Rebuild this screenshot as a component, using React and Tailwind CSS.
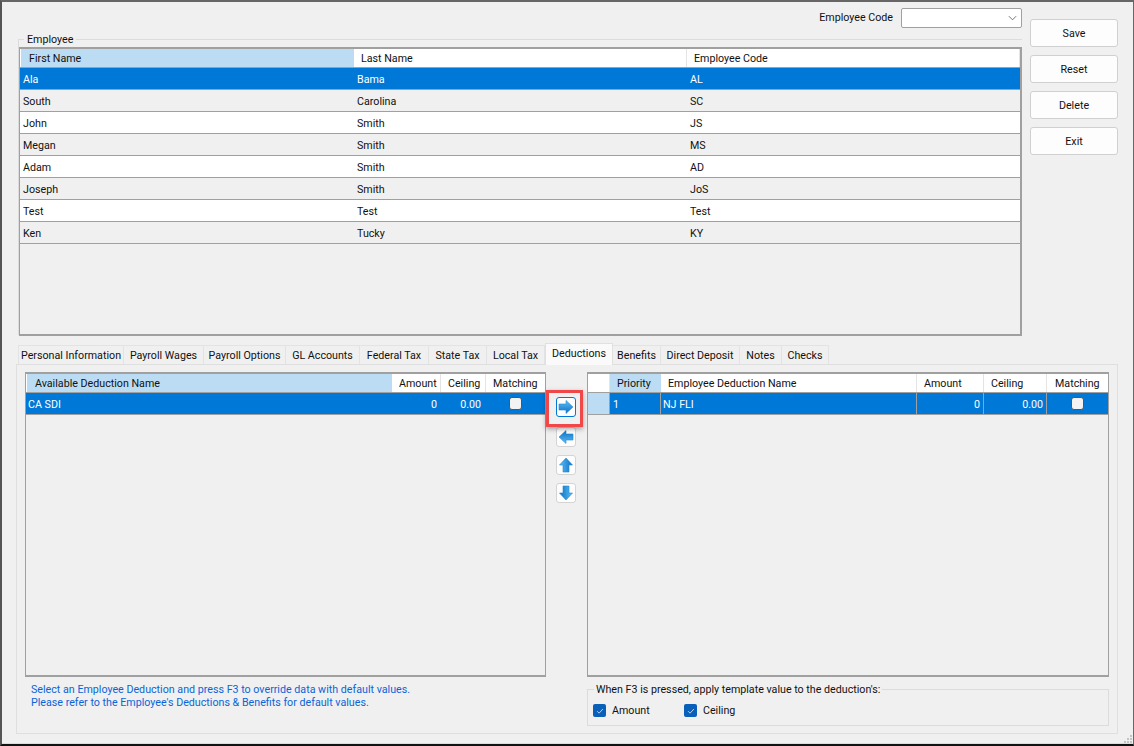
const font = "font-['Roboto','Open_Sans',sans-serif]";

const employees = [
    ['Ala', 'Bama', 'AL'],
    ['South', 'Carolina', 'SC'],
    ['John', 'Smith', 'JS'],
    ['Megan', 'Smith', 'MS'],
    ['Adam', 'Smith', 'AD'],
    ['Joseph', 'Smith', 'JoS'],
    ['Test', 'Test', 'Test'],
    ['Ken', 'Tucky', 'KY'],
];

const tabs = [
    ['Personal Information', 'w-[106px]'],
    ['Payroll Wages', 'w-[80px]'],
    ['Payroll Options', 'w-[82px]'],
    ['GL Accounts', 'w-[74px]'],
    ['Federal Tax', 'w-[69px]'],
    ['State Tax', 'w-[58px]'],
    ['Local Tax', 'w-[58px]'],
    ['Deductions', 'w-[68px]'],
    ['Benefits', 'w-[48px]'],
    ['Direct Deposit', 'w-[79px]'],
    ['Notes', 'w-[42px]'],
    ['Checks', 'w-[47px]'],
];

const Arrow = ({ rotate }) => (
    <svg viewBox="0 0 16 16" className={`w-4 h-4 ${rotate}`}>
        <defs>
            <linearGradient id="arrowBlue" x1="0" y1="0" x2="0" y2="1">
                <stop offset="0" stopColor="#5cc0f4" />
                <stop offset="1" stopColor="#0a6fc8" />
            </linearGradient>
        </defs>
        <path d="M1 5h7V1.5L15 8l-7 6.5V11H1z" fill="url(#arrowBlue)" stroke="#2a86d0" strokeWidth="0.6" />
    </svg>
);

const ArrowButton = ({ rotate, active, className = '' }) => (
    <div className={`w-[20px] h-[20px] flex items-center justify-center rounded-[3px] bg-[#fdfdfd] border ${active ? 'border-[#0078d7]' : 'border-[#d4d4d4]'} ${className}`}>
        <Arrow rotate={rotate} />
    </div>
);

const Check = ({ checked }) =>
    checked ? (
        <span className="w-[13px] h-[13px] rounded-[2px] bg-[#0a5fb8] flex items-center justify-center shrink-0">
            <svg viewBox="0 0 12 12" className="w-[10px] h-[10px]">
                <path d="M2.5 6.2l2.4 2.4 4.6-5" fill="none" stroke="#d6e8fa" strokeWidth="1" />
            </svg>
        </span>
    ) : (
        <span className="w-[13px] h-[13px] rounded-[3px] bg-[#f3f3f3] border border-[#555]" />
    );

const Head = ({ className = '', children }) => (
    <div className={`h-full flex items-center pl-[7px] pt-[2px] border-r border-[#e4e4e4] ${className}`}>{children}</div>
);

const Cell = ({ className = '', children }) => (
    <div className={`h-full flex items-center pt-[3px] border-r border-[#a0a0a0] ${className}`}>{children}</div>
);

export default function App() {
    return (
        <div className={`${font} text-[10.7px] text-[#111] w-[1134px] h-[746px] bg-[#f0f0f0] border-l-2 border-t-2 border-r border-b-2 border-l-[#555] border-t-[#666] border-r-[#666] border-b-[#111] overflow-hidden relative`}>
            <div className="flex h-[341px] pl-[16px]">
                <div className="w-[1004px]">
                    <div className="mt-[6px] h-[20px] flex justify-end items-center">
                        <span className="mr-[8px]">Employee Code</span>
                        <div className="w-[121px] h-[20px] bg-white border border-[#a0a0a0] rounded-[2px] flex items-center justify-end pr-[4px]">
                            <svg viewBox="0 0 10 6" className="w-[9px] h-[6px]">
                                <path d="M1 1l4 4 4-4" fill="none" stroke="#666" strokeWidth="1" />
                            </svg>
                        </div>
                    </div>
                    <div className="mt-[11px] border-t border-l border-[#dcdcdc] h-[296px]">
                        <span className="block w-fit -mt-[7px] ml-[5px] px-[3px] h-[14px] leading-[14px] bg-[#f0f0f0]">Employee</span>
                        <div className="h-[289px] border-2 border-l border-[#a0a0a0]">
                            <div className="grid grid-cols-[334px_333px_333px] h-[19px] bg-white border-b border-[#a0a0a0]">
                                <div className="h-full flex items-center pl-[8px] pt-[2px] bg-[#bcdcf4] ml-[1px]">First Name</div>
                                <Head>Last Name</Head>
                                <Head>Employee Code</Head>
                            </div>
                            {employees.map((row, i) => (
                                <div
                                    key={row[2]}
                                    className={`grid grid-cols-[334px_333px_333px] h-[22px] pt-[3px] items-center border-b border-[#a0a0a0] ${i === 0 ? 'bg-[#0078d7] text-white' : i % 2 === 1 ? 'bg-[#f0f0f0]' : 'bg-white'}`}
                                >
                                    <span className="pl-[3px]">{row[0]}</span>
                                    <span className="pl-[3px]">{row[1]}</span>
                                    <span className="pl-[3px]">{row[2]}</span>
                                </div>
                            ))}
                        </div>
                    </div>
                </div>
                <div className="w-[88px] ml-[8px] pt-[17px] flex flex-col gap-[8px]">
                    {['Save', 'Reset', 'Delete', 'Exit'].map((b) => (
                        <div key={b} className="h-[28px] pt-[2px] bg-[#fdfdfd] border border-[#d0d0d0] rounded-[3px] flex items-center justify-center">
                            {b}
                        </div>
                    ))}
                </div>
            </div>

            <div className="ml-[16px] h-[21px] flex items-end">
                {tabs.map(([t, w]) =>
                    t === 'Deductions' ? (
                        <div key={t} className={`${w} h-[22px] bg-[#fafafa] border border-b-0 border-[#e0e0e0] flex items-center justify-center relative z-10 -mb-[1px]`}>
                            {t}
                        </div>
                    ) : (
                        <div key={t} className={`${w} h-[19px] pt-[2px] border border-l-0 first:border-l border-b-0 border-[#e3e3e3] flex items-center justify-center whitespace-nowrap`}>
                            {t}
                        </div>
                    )
                )}
            </div>

            <div className="ml-[14px] w-[1102px] h-[370px] border border-[#dfdfdf] pl-[8px] pt-[7px] flex relative">
                <div className="w-[521px]">
                    <div className="h-[305px] border-2 border-[#a0a0a0] border-l border-r">
                        <div className="grid grid-cols-[1px_365px_49px_45px_1fr] h-[19px] bg-white border-b border-[#a0a0a0]">
                            <div />
                            <div className="h-full flex items-center pl-[8px] pt-[2px] bg-[#bcdcf4]">Available Deduction Name</div>
                            <Head>Amount</Head>
                            <Head>Ceiling</Head>
                            <Head className="pl-[6px] border-r-0">Matching</Head>
                        </div>
                        <div className="grid grid-cols-[366px_49px_45px_1fr] h-[22px] bg-[#0078d7] text-white border-b border-[#a0a0a0]">
                            <Cell className="pl-[2px] border-r-0">CA SDI</Cell>
                            <Cell className="justify-end pr-[4px] border-r-0">0</Cell>
                            <Cell className="justify-end pr-[5px] border-r-0">0.00</Cell>
                            <div className="h-full flex items-center justify-center"><Check /></div>
                        </div>
                    </div>
                    <p className="mt-[6px] ml-[6px] text-[#0a64d8] leading-[13px]">
                        Select an Employee Deduction and press F3 to override data with default values.
                        <br />
                        Please refer to the Employee's Deductions &amp; Benefits for default values.
                    </p>
                </div>

                <div className="w-[41px] pt-[25px] pl-[10px]">
                    <ArrowButton active rotate="" />
                    <ArrowButton rotate="rotate-180" className="mt-[10px]" />
                    <ArrowButton rotate="-rotate-90" className="mt-[8px]" />
                    <ArrowButton rotate="rotate-90" className="mt-[8px]" />
                </div>

                <div className="w-[522px]">
                    <div className="h-[305px] border-2 border-[#a0a0a0] border-l border-r">
                        <div className="grid grid-cols-[22px_51px_256px_67px_63px_1fr] h-[19px] bg-white border-b border-[#a0a0a0]">
                            <Head />
                            <div className="h-full flex items-center pl-[7px] pt-[2px] bg-[#bcdcf4]">Priority</div>
                            <Head>Employee Deduction Name</Head>
                            <Head>Amount</Head>
                            <Head>Ceiling</Head>
                            <Head className="pl-[8px] border-r-0">Matching</Head>
                        </div>
                        <div className="grid grid-cols-[22px_51px_256px_67px_63px_1fr] h-[22px] bg-[#0078d7] text-white border-b border-[#a0a0a0]">
                            <div className="h-full bg-[#bcdcf4] border-r border-[#a0a0a0]" />
                            <Cell className="pl-[3px]">1</Cell>
                            <Cell className="pl-[2px]">NJ FLI</Cell>
                            <Cell className="justify-end pr-[3px]">0</Cell>
                            <Cell className="justify-end pr-[3px]">0.00</Cell>
                            <div className="h-full flex items-center justify-center"><Check /></div>
                        </div>
                    </div>
                    <div className="mt-[12px] h-[37px] border border-[#dcdcdc]">
                        <span className="block w-fit -mt-[7px] ml-[6px] px-[2px] h-[14px] leading-[14px] bg-[#f0f0f0]">
                            When F3 is pressed, apply template value to the deduction's:
                        </span>
                        <div className="flex items-center mt-[5px] ml-[5px]">
                            <Check checked />
                            <span className="ml-[6px] w-[72px] pt-[1px]">Amount</span>
                            <Check checked />
                            <span className="ml-[6px] pt-[1px]">Ceiling</span>
                        </div>
                    </div>
                </div>

                <div className="absolute left-[529px] top-[25px] w-[37px] h-[37px] border-[3px] border-[#f04848] shadow-[0_2px_5px_rgba(0,0,0,0.35)]" />
            </div>

            <div className="absolute bottom-0 left-0 right-0 h-[1px] bg-[#dcdcdc]" />
            <svg viewBox="0 0 8 8" className="absolute right-[1px] bottom-[1px] w-[8px] h-[8px]">
                <path d="M6 0h2v2H6zM3 3h2v2H3zM6 3h2v2H6zM0 6h2v2H0zM3 6h2v2H3zM6 6h2v2H6z" fill="#c4c4c4" />
            </svg>
        </div>
    );
}
